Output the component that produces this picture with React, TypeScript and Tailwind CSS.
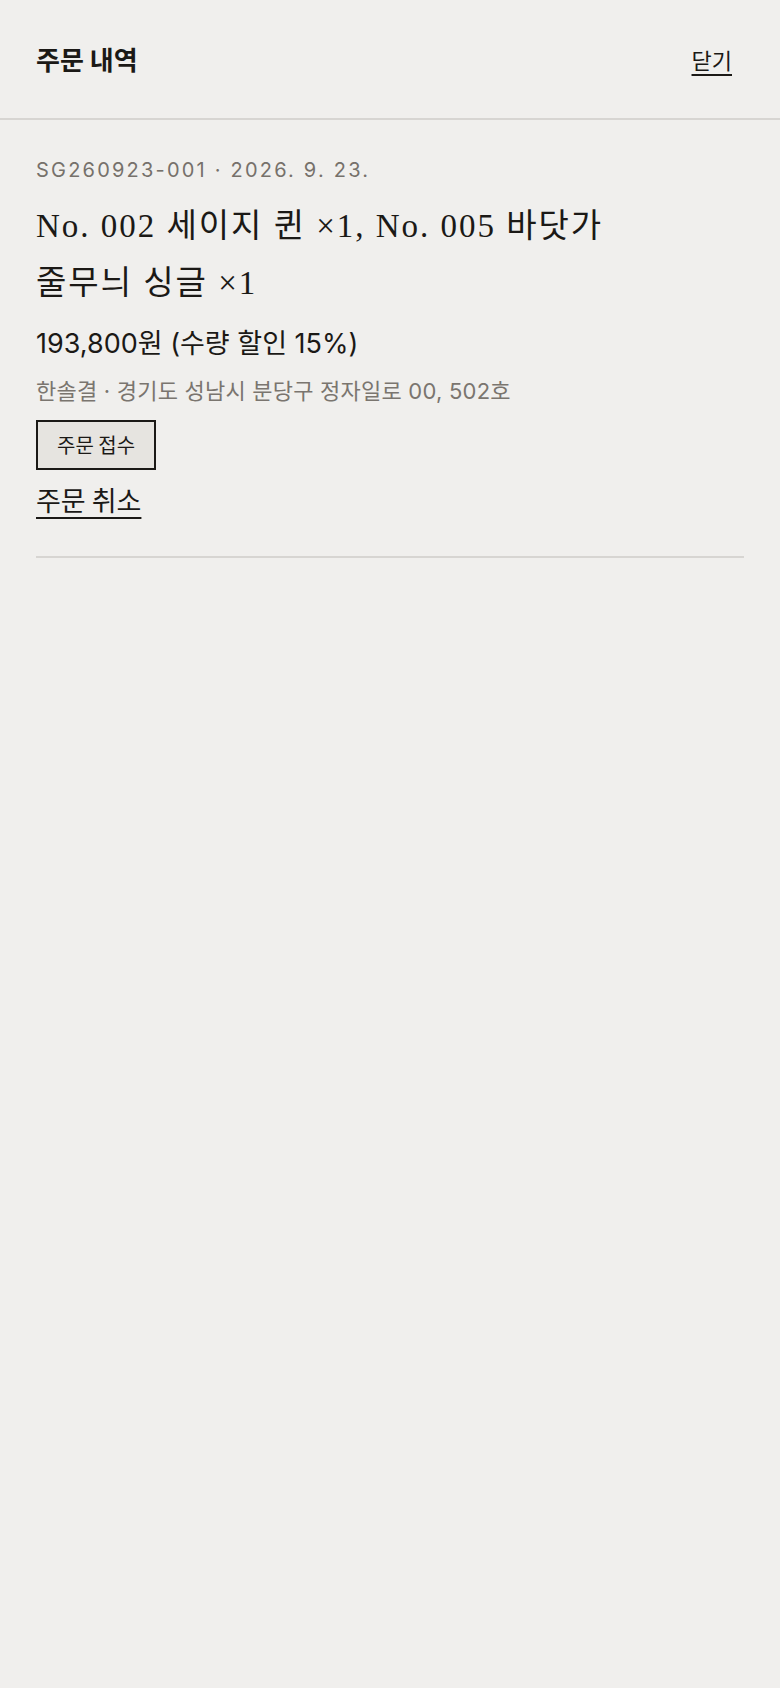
import React from 'react';

const order = {
  code: 'SG260923-001',
  date: '2026. 9. 23.',
  items: 'No. 002 세이지 퀸 ×1, No. 005 바닷가 줄무늬 싱글 ×1',
  total: '193,800원 (수량 할인 15%)',
  address: '한솔결 · 경기도 성남시 분당구 정자일로 00, 502호',
  status: '주문 접수',
};

function App() {
  return (
    <div className="min-h-[1688px] w-full bg-[#f0efed] text-[#1b1916] font-['Inter','Noto_Sans_CJK_KR',sans-serif]">
      {/* Header */}
      <header className="flex h-[120px] items-center justify-between border-b-2 border-[#d7d5d2] pl-9 pr-9">
        <h1 className="text-[26px] font-bold leading-8 font-['Noto_Sans_CJK_KR',sans-serif]">주문 내역</h1>
        <button className="px-3 text-[22px] leading-8 underline underline-offset-[5px] decoration-[1.5px] font-['Noto_Sans_CJK_KR',sans-serif]">
          닫기
        </button>
      </header>

      {/* Order list */}
      <main className="px-9">
        <section className="flex flex-col items-start border-b-2 border-[#d7d5d2] pt-[36px] pb-[40px]">
          <p className="text-[20px] leading-7 tracking-[0.11em] text-[#76716b]">
            {order.code} · {order.date}
          </p>
          <h2 className="mt-[14px] max-w-[650px] break-keep text-[33px] leading-[57px] tracking-[0.06em] font-['Liberation_Serif','Noto_Sans_CJK_KR',serif]">
            {order.items}
          </h2>
          <p className="mt-[16px] text-[27px] leading-8">{order.total}</p>
          <p className="mt-[16px] text-[22px] leading-[30px] tracking-[0.01em] text-[#7a756f]">{order.address}</p>
          <span className="mt-[14px] flex h-[50px] items-center border-2 border-[#1b1916] bg-[#e6e4e0] px-[19px] text-[20px] font-['Noto_Sans_CJK_KR',sans-serif]">
            {order.status}
          </span>
          <button className="mt-[14px] text-[27px] leading-8 underline underline-offset-[6px] decoration-2 font-['Noto_Sans_CJK_KR',sans-serif]">
            주문 취소
          </button>
        </section>
      </main>
    </div>
  );
}

export default App;
